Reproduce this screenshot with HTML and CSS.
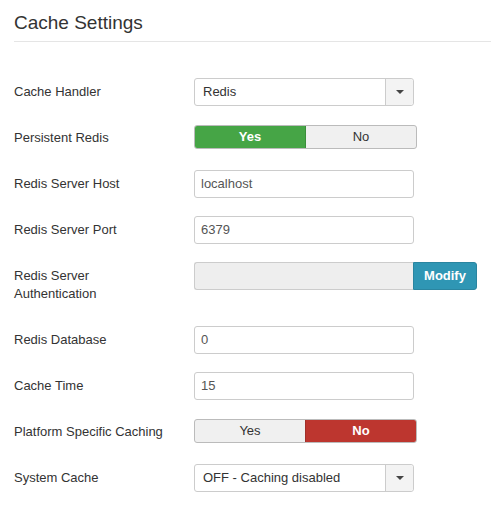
FILE: index.html
```html
<!DOCTYPE html>
<html>
<head>
<meta charset="utf-8">
<link rel="stylesheet" href="styles.css">
</head>
<body>
<div class="page">
  <h2 class="title">Cache Settings</h2>
  <div class="form">
    <div class="row">
      <div class="label">Cache Handler</div>
      <div class="select"><span class="select-text">Redis</span><span class="caret-box"><span class="caret"></span></span></div>
    </div>
    <div class="row">
      <div class="label">Persistent Redis</div>
      <div class="toggle"><span class="opt active-yes">Yes</span><span class="opt">No</span></div>
    </div>
    <div class="row">
      <div class="label">Redis Server Host</div>
      <div class="input">localhost</div>
    </div>
    <div class="row">
      <div class="label">Redis Server Port</div>
      <div class="input">6379</div>
    </div>
    <div class="row">
      <div class="label label-wrap">Redis Server<br>Authentication</div>
      <div class="auth"><span class="auth-field"></span><span class="btn-info">Modify</span></div>
    </div>
    <div class="row">
      <div class="label">Redis Database</div>
      <div class="input">0</div>
    </div>
    <div class="row">
      <div class="label">Cache Time</div>
      <div class="input">15</div>
    </div>
    <div class="row">
      <div class="label">Platform Specific Caching</div>
      <div class="toggle"><span class="opt">Yes</span><span class="opt active-no">No</span></div>
    </div>
    <div class="row">
      <div class="label">System Cache</div>
      <div class="select"><span class="select-text">OFF - Caching disabled</span><span class="caret-box"><span class="caret"></span></span></div>
    </div>
  </div>
</div>
</body>
</html>
```
FILE: styles.css
```css
html, body {
  margin: 0;
  padding: 0;
  background: #fff;
}
body {
  font-family: "Liberation Sans", Arial, sans-serif;
  font-size: 13px;
  color: #333;
}
.page {
  padding: 11px 0 0 14px;
}
.title {
  margin: 0;
  font-size: 19px;
  font-weight: normal;
  line-height: 23px;
  color: #333;
  padding-bottom: 7px;
  border-bottom: 1px solid #e5e5e5;
}
.form {
  padding-top: 36px;
}
.row {
  display: flex;
  align-items: flex-start;
  margin-bottom: 18px;
  min-height: 28px;
}
.label {
  width: 180px;
  flex: none;
  padding-top: 5px;
  line-height: 18px;
  color: #333;
}
.label-wrap {
  padding-bottom: 5px;
}
.select {
  width: 218px;
  height: 26px;
  border: 1px solid #ccc;
  border-radius: 3px;
  display: flex;
  align-items: stretch;
  color: #333;
  box-sizing: content-box;
}
.select-text {
  flex: 1;
  padding-left: 8px;
  line-height: 26px;
}
.caret-box {
  width: 27px;
  border-left: 1px solid #ccc;
  background: #f3f3f3;
  display: flex;
  align-items: center;
  justify-content: center;
  border-radius: 0 3px 3px 0;
}
.caret {
  width: 0;
  height: 0;
  border-left: 4px solid transparent;
  border-right: 4px solid transparent;
  border-top: 4px solid #444;
}
.toggle {
  margin-top: 1px;
  width: 221px;
  height: 22px;
  border: 1px solid #bbb;
  border-radius: 3px;
  display: flex;
  overflow: hidden;
  background: #f0f0f0;
}
.opt {
  flex: 1;
  text-align: center;
  line-height: 22px;
  color: #333;
}
.active-yes {
  background: #46a546;
  color: #fff;
  font-weight: bold;
  border-right: 1px solid #3a8e3a;
}
.active-no {
  background: #bd362f;
  color: #fff;
  font-weight: bold;
  border-left: 1px solid #a0302a;
}
.input {
  width: 212px;
  height: 26px;
  line-height: 26px;
  padding-left: 6px;
  border: 1px solid #ccc;
  border-radius: 3px;
  color: #555;
}
.auth {
  display: flex;
  height: 28px;
}
.auth-field {
  width: 218px;
  border: 1px solid #ccc;
  border-right: none;
  border-radius: 3px 0 0 3px;
  background: #eee;
}
.btn-info {
  width: 64px;
  background: #2f96b4;
  color: #fff;
  font-weight: bold;
  text-align: center;
  line-height: 26px;
  border: 1px solid #2a85a0;
  border-radius: 0 3px 3px 0;
  box-sizing: border-box;
}
```
